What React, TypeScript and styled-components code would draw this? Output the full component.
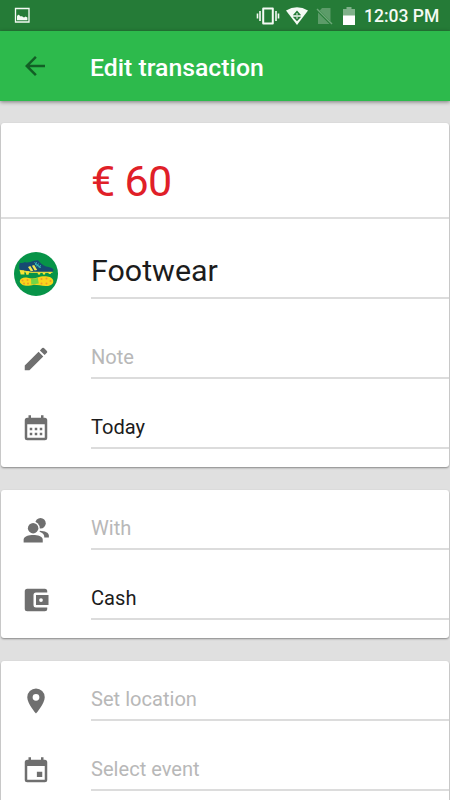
import React from "react";
import styled, { createGlobalStyle } from "styled-components";

const GlobalStyle = createGlobalStyle`
  * { box-sizing: border-box; }
  body { margin: 0; background: #e0e0e0; font-family: Roboto, "Liberation Sans", sans-serif; }
`;

const Screen = styled.div`
  width: 450px;
  height: 800px;
  overflow: hidden;
  background: #e0e0e0;
`;

const StatusBar = styled.header`
  display: flex;
  align-items: center;
  height: 31px;
  padding: 0 11px 0 14px;
  background: #257b37;
  color: #f4faf4;
`;

const StatusIcons = styled.div`
  display: flex;
  align-items: center;
  height: 31px;
  margin-left: auto;
`;

const StatusSvg = styled.svg<{ $gap?: number }>`
  display: block;
  flex: none;
  margin-right: ${(p) => p.$gap ?? 0}px;
`;

const Clock = styled.span`
  width: 75px;
  font-size: 17.5px;
  font-weight: 500;
  line-height: 31px;
  padding-top: 2px;
  white-space: nowrap;
`;

const AppBar = styled.nav`
  display: flex;
  align-items: center;
  height: 70px;
  background: #2dba4c;
  box-shadow: 0 1px 4px rgba(0, 0, 0, 0.45);
`;

const BackButton = styled.button`
  display: flex;
  align-items: center;
  width: 90px;
  height: 70px;
  padding: 0 0 0 20px;
  border: 0;
  background: none;
`;

const Title = styled.h1`
  margin: 0;
  padding-top: 3px;
  color: #fff;
  font-size: 24.8px;
  font-weight: 500;
  line-height: 70px;
`;

const Form = styled.main`
  display: flex;
  flex-direction: column;
  gap: 23px;
  padding: 22px 1px 0 1px;
`;

const Card = styled.section<{ $height: number }>`
  flex: none;
  height: ${(p) => p.$height}px;
  border-radius: 3px;
  background: #fff;
  box-shadow: 0 1px 2px rgba(0, 0, 0, 0.4);
`;

const Row = styled.div<{ $height: number; $full?: boolean }>`
  display: flex;
  height: ${(p) => p.$height}px;
  border-bottom: ${(p) => (p.$full ? "2px solid #dedede" : "0")};
`;

const IconCell = styled.div<{ $bottom: number }>`
  display: flex;
  flex: none;
  align-items: flex-end;
  justify-content: center;
  width: 70px;
  margin-right: 20px;
  padding-bottom: ${(p) => p.$bottom}px;
`;

const Field = styled.div<{
  $size?: number;
  $tone?: "value" | "hint" | "expense";
  $bottom: number;
  $bare?: boolean;
  $tracking?: number;
}>`
  display: flex;
  flex: 1;
  align-items: flex-end;
  padding-bottom: ${(p) => p.$bottom}px;
  border-bottom: ${(p) => (p.$bare ? "0" : "2px solid #dcdcdc")};
  color: ${(p) =>
    p.$tone === "expense" ? "#e02028" : p.$tone === "hint" ? "#b8b8b8" : "#1c1c1c"};
  font-size: ${(p) => p.$size ?? 20.1}px;
  letter-spacing: ${(p) => p.$tracking ?? 0}px;
  line-height: 1;
  white-space: nowrap;
`;

const Glyph = ({ children }: { children: React.ReactNode }) => (
  <svg width="30" height="30" viewBox="0 0 24 24" fill="#6f6f6f" fillRule="evenodd">
    {children}
  </svg>
);

const PencilIcon = () => (
  <Glyph>
    <path d="M3 17.25V21h3.75L17.81 9.94l-3.75-3.75L3 17.25zM20.71 7.04a1 1 0 0 0 0-1.41l-2.34-2.34a1 1 0 0 0-1.41 0l-1.83 1.83 3.75 3.75 1.83-1.83z" />
  </Glyph>
);

const CalendarIcon = () => (
  <Glyph>
    <path d="M19 3h-1V1h-2v2H8V1H6v2H5a2 2 0 0 0-2 2v14a2 2 0 0 0 2 2h14a2 2 0 0 0 2-2V5a2 2 0 0 0-2-2zm0 16H5V8.2h14V19z" />
    <path d="M7 11h2v2H7zM11 11h2v2h-2zM15 11h2v2h-2zM7 15h2v2H7zM11 15h2v2h-2zM15 15h2v2h-2z" />
  </Glyph>
);

const PeopleIcon = () => (
  <Glyph>
    <circle cx="15.6" cy="6.6" r="4.2" />
    <path d="M15 12.6c4.1.2 7.3 1.5 7.3 4V18H14z" />
    <circle cx="9.7" cy="10.5" r="5.3" fill="#fff" />
    <path d="M1 20.6v-3c0-3.6 5-4.8 9.2-4.8 4.6 0 8.4 1.4 8.4 4.8v3z" fill="#fff" />
    <circle cx="9.7" cy="10.5" r="4.2" />
    <path d="M2.1 22v-2.3c0-2.6 4.3-3.7 7.7-3.7s7.6 1.1 7.6 3.7V22z" />
  </Glyph>
);

const WalletIcon = () => (
  <Glyph>
    <path d="M21 18v1a2 2 0 0 1-2 2H5a2 2 0 0 1-2-2V5a2 2 0 0 1 2-2h14a2 2 0 0 1 2 2v1h-9a2 2 0 0 0-2 2v8a2 2 0 0 0 2 2h9zm-9-2h10V8H12v8zm4-2.5a1.5 1.5 0 1 1 0-3 1.5 1.5 0 0 1 0 3z" />
  </Glyph>
);

const PinIcon = () => (
  <Glyph>
    <path d="M12 2a7 7 0 0 0-7 7c0 5.25 7 13 7 13s7-7.75 7-13a7 7 0 0 0-7-7zm0 9.7a2.7 2.7 0 1 1 0-5.4 2.7 2.7 0 0 1 0 5.4z" />
  </Glyph>
);

const EventIcon = () => (
  <Glyph>
    <path d="M17 12.5h-4.3v4.3H17v-4.3zM16 1v2H8V1H6v2H5a2 2 0 0 0-2 2v14a2 2 0 0 0 2 2h14a2 2 0 0 0 2-2V5a2 2 0 0 0-2-2h-1V1h-2zm3 18H5V8h14v11z" />
  </Glyph>
);

const FootwearIcon = () => (
  <svg width="46" height="45" viewBox="-0.5 0.5 46 45">
    <circle cx="22.5" cy="22.5" r="22" fill="#079448" />
    <path d="M6.3 11.2c1.5.7 3.5.5 5.2-.7 2 1.5 6-.2 9-1.2l4-.5c2 2.3 4.5 4.9 8 6.2 4 .8 7.3 1.4 7.5 3.6l-1 2H19L7 19.5c-1.5-2-1.7-5.5-.7-8.3z" fill="#164a72" />
    <path d="M6 18.3l12 1.9h21v1.3H18L6.5 20.5z" fill="#d5d43d" />
    <path d="M6.3 19h4.2l.5 4H7.2zM12 19.7h4l-1 3.5h-2.2zM24 21h3l-.5 2h-2zM29 21h3l-.5 2h-2zM35 20.5h3l-.8 2h-2z" fill="#f4e436" />
    <path d="M14.5 15.5l2.3-.9 3 4.7-2.5.4zM18.4 14.2l2.3-.8 3 5-2.5.5z" fill="#f3e756" />
    <path d="M21 11l4.5 3.8M23 10.5l-1.2 3M25 12l-1.7 3M27 13.5l-1.5 3M22 13l5.5 3" stroke="#37b8b4" strokeWidth="1" fill="none" />
    <path d="M6.2 29.8c.5-3.2 4.1-4.3 8-3.5 3.8 1 6.6.7 9.8-.4 5-1.6 13.5-1.9 15.6 2.5 1 3.5-1.8 6-6.6 6-5 .2-9-1.4-13-1.2-4.5 1.6-12.8 2-13.8-3.4z" fill="#f8d51c" />
    <path d="M17.5 27.5l6.8-1 1 5.5-7.5 1z" fill="#74d544" />
    <g fill="#ee9a2c">
      <circle cx="9" cy="29" r="1" /><circle cx="10.5" cy="32" r="1" />
      <circle cx="14" cy="28.5" r="1" /><circle cx="14.5" cy="32" r="1" />
      <circle cx="28" cy="27.5" r="1" /><circle cx="28" cy="32" r="1" />
      <circle cx="33" cy="27" r="1" /><circle cx="33" cy="32" r="1" />
      <circle cx="37" cy="29.5" r="1" />
    </g>
  </svg>
);

interface RowData {
  icon: React.ReactNode;
  text: string;
  hint?: boolean;
  height: number;
}

const FormRow = ({ icon, text, hint, height }: RowData) => (
  <Row $height={height}>
    <IconCell $bottom={5}>{icon}</IconCell>
    <Field $bottom={10} $tone={hint ? "hint" : "value"}>{text}</Field>
  </Row>
);

export default function App() {
  return (
    <>
      <GlobalStyle />
      <Screen>
        <StatusBar>
          <StatusSvg width="17" height="17" viewBox="0 0 17 17">
            <path d="M1.5 1.5H15V15H1.5z" fill="none" stroke="currentColor" strokeWidth="1.3" />
            <path d="M3 13.3V9.2l1-1.5 1.3.2.7 1.3h2.2l1 1h1.5l.8-.8 1.9 1.2v2.7z" fill="currentColor" />
          </StatusSvg>
          <StatusIcons>
            <StatusSvg $gap={6} width="24" height="18" viewBox="0 0 24 18">
              <path d="M7.2 1.5h9.6v15H7.2z" fill="none" stroke="currentColor" strokeWidth="2" strokeLinejoin="round" />
              <path d="M4 4v10M1.5 6.5v5M20 4v10M22.5 6.5v5" stroke="currentColor" strokeWidth="1.6" />
            </StatusSvg>
            <StatusSvg $gap={8} width="22" height="18" viewBox="0 0 22 18">
              <path d="M0 3.5Q11-3 22 3.5L11 18z" fill="currentColor" />
              <path d="M11 3.5l4.2 4.7H6.8zM6.8 9.8h8.4L11 14.2z" fill="#257b37" />
              <path d="M11 6v2.2M11 9.8v2" stroke="#f4faf4" strokeWidth="1" />
            </StatusSvg>
            <StatusSvg $gap={10} width="17" height="18" viewBox="0 0 17 18">
              <path d="M6 1h8.5v13.2L3.8 3.4zM2 5.5L13.5 17H2z" fill="#5c9c69" />
              <path d="M1 2l15 15" stroke="#6da778" strokeWidth="1.4" />
            </StatusSvg>
            <StatusSvg $gap={9} width="12" height="18" viewBox="0 0 12 18">
              <path d="M0 2h3.5V0h5v2H12v7H0z" fill="#80b18a" />
              <path d="M0 8.5h12V18H0z" fill="#fff" />
            </StatusSvg>
            <Clock>12:03 PM</Clock>
          </StatusIcons>
        </StatusBar>
        <AppBar>
          <BackButton aria-label="Back">
            <svg width="30" height="30" viewBox="0 0 24 24" fill="#125f25">
              <path d="M20 11H7.83l5.59-5.59L12 4l-8 8 8 8 1.41-1.41L7.83 13H20v-2z" />
            </svg>
          </BackButton>
          <Title>Edit transaction</Title>
        </AppBar>
        <Form>
          <Card $height={344}>
            <Row $height={96} $full>
              <IconCell $bottom={0} />
              <Field $tone="expense" $size={43} $bottom={14.5} $tracking={-0.7} $bare>€ 60</Field>
            </Row>
            <Row $height={80}>
              <IconCell $bottom={2}><FootwearIcon /></IconCell>
              <Field $size={30.4} $bottom={11}>Footwear</Field>
            </Row>
            <FormRow height={80} icon={<PencilIcon />} text="Note" hint />
            <FormRow height={70} icon={<CalendarIcon />} text="Today" />
          </Card>
          <Card $height={148}>
            <FormRow height={60} icon={<PeopleIcon />} text="With" hint />
            <FormRow height={70} icon={<WalletIcon />} text="Cash" />
          </Card>
          <Card $height={160}>
            <FormRow height={60} icon={<PinIcon />} text="Set location" hint />
            <FormRow height={70} icon={<EventIcon />} text="Select event" hint />
          </Card>
        </Form>
      </Screen>
    </>
  );
}
